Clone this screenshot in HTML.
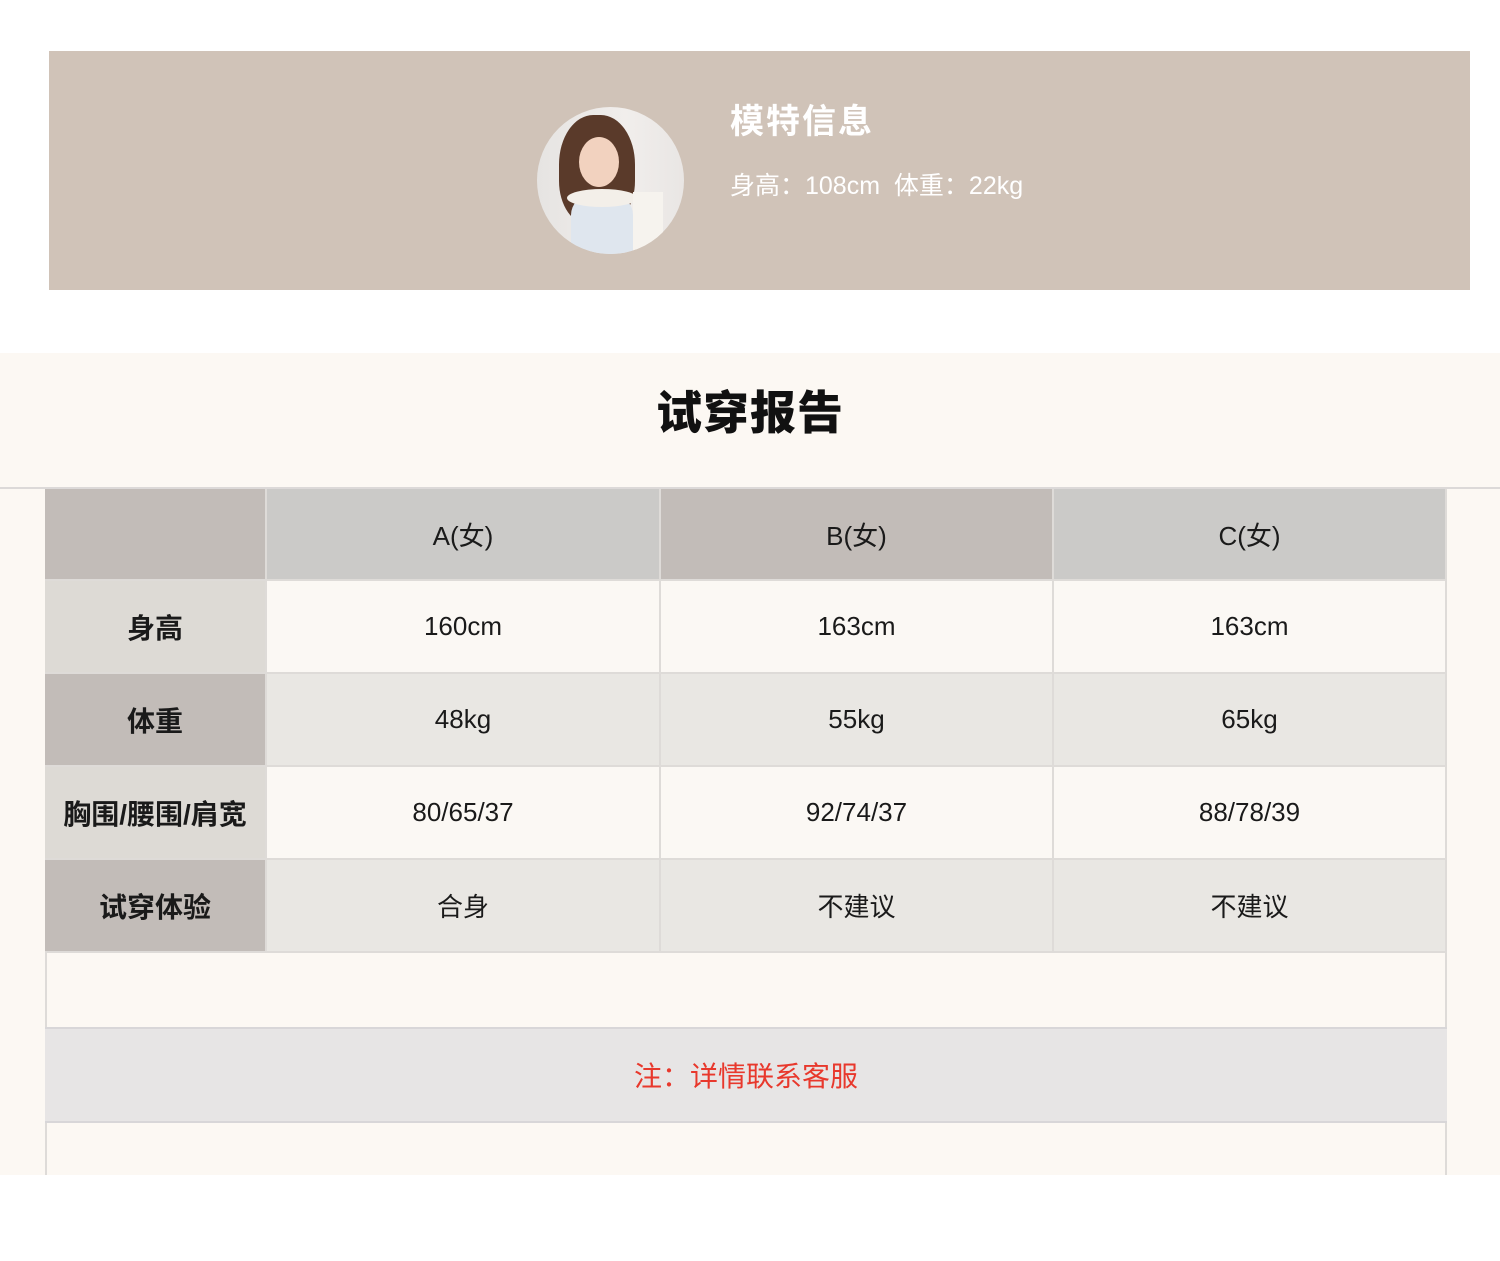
<!DOCTYPE html>
<html><head><meta charset="utf-8"><style>
*{margin:0;padding:0;box-sizing:border-box}
body{width:1500px;height:1261px;background:#fff;position:relative;overflow:hidden;font-family:"Liberation Sans","Noto Sans CJK SC",sans-serif;color:#1a1a1a}
.abs{position:absolute}
.banner{left:49px;top:51px;width:1421px;height:239px;background:#d0c3b8}
.av{left:537px;top:107px;width:147px;height:147px;border-radius:50%;overflow:hidden;background:linear-gradient(90deg,#e6e4e2,#f1eeec 60%,#e9e6e4)}
.t1{left:730px;top:94px;font-size:34px;font-weight:bold;color:#fff;letter-spacing:2px}
.t2{left:730px;top:166px;font-size:25px;color:#fff}
.cream{left:0;top:353px;width:1500px;height:822px;background:#fcf8f3}
.title{left:0;top:377px;width:1500px;text-align:center;font-size:46px;font-weight:900;color:#111;letter-spacing:1px}
.hl{left:0;top:487px;width:1500px;height:2px;background:#dcd9d8}
.c{position:absolute;display:flex;align-items:center;justify-content:center;font-size:26px;border-right:2px solid #dedbd8;border-bottom:2px solid #dedbd8}
.lab{font-weight:bold;font-size:28px}
</style></head><body>
<div class="abs banner"></div>
<div class="abs av">
 <div class="abs" style="left:22px;top:8px;width:76px;height:110px;border-radius:45% 45% 40% 40%;background:#5a3a2a"></div>
 <div class="abs" style="left:42px;top:30px;width:40px;height:50px;border-radius:50%;background:#f2d2bf"></div>
 <div class="abs" style="left:34px;top:88px;width:62px;height:70px;border-radius:20px 20px 0 0;background:#dfe6ee"></div>
 <div class="abs" style="left:30px;top:82px;width:70px;height:18px;border-radius:50%;background:#f3efe9"></div>
 <div class="abs" style="left:96px;top:85px;width:30px;height:70px;background:#f6f3ee"></div>
</div>
<div class="abs t1">模特信息</div>
<div class="abs t2">身高：108cm&nbsp;&nbsp;体重：22kg</div>
<div class="abs cream"></div>
<div class="abs title">试穿报告</div>
<div class="abs hl"></div>
<div class="abs" style="left:45px;top:489px;width:1402px;height:686px;border-left:2px solid #dedbd8;border-right:2px solid #dedbd8"></div>
<div class="c" style="left:45px;top:489px;width:222px;height:92px;background:#c2bcb8"></div>
<div class="c" style="left:267px;top:489px;width:394px;height:92px;background:#cbcac8">A(女)</div>
<div class="c" style="left:661px;top:489px;width:393px;height:92px;background:#c2bcb8">B(女)</div>
<div class="c" style="left:1054px;top:489px;width:393px;height:92px;background:#cbcac8">C(女)</div>

<div class="c lab" style="left:45px;top:581px;width:222px;height:93px;background:#dddad5">身高</div>
<div class="c" style="left:267px;top:581px;width:394px;height:93px;background:#fbf8f4">160cm</div>
<div class="c" style="left:661px;top:581px;width:393px;height:93px;background:#fbf8f4">163cm</div>
<div class="c" style="left:1054px;top:581px;width:393px;height:93px;background:#fbf8f4">163cm</div>

<div class="c lab" style="left:45px;top:674px;width:222px;height:93px;background:#c2bcb8">体重</div>
<div class="c" style="left:267px;top:674px;width:394px;height:93px;background:#e9e7e3">48kg</div>
<div class="c" style="left:661px;top:674px;width:393px;height:93px;background:#e9e7e3">55kg</div>
<div class="c" style="left:1054px;top:674px;width:393px;height:93px;background:#e9e7e3">65kg</div>

<div class="c lab" style="left:45px;top:767px;width:222px;height:93px;background:#dddad5">胸围/腰围/肩宽</div>
<div class="c" style="left:267px;top:767px;width:394px;height:93px;background:#fbf8f4">80/65/37</div>
<div class="c" style="left:661px;top:767px;width:393px;height:93px;background:#fbf8f4">92/74/37</div>
<div class="c" style="left:1054px;top:767px;width:393px;height:93px;background:#fbf8f4">88/78/39</div>

<div class="c lab" style="left:45px;top:860px;width:222px;height:93px;background:#c2bcb8">试穿体验</div>
<div class="c" style="left:267px;top:860px;width:394px;height:93px;background:#e9e7e3">合身</div>
<div class="c" style="left:661px;top:860px;width:393px;height:93px;background:#e9e7e3">不建议</div>
<div class="c" style="left:1054px;top:860px;width:393px;height:93px;background:#e9e7e3">不建议</div>

<div class="c" style="left:45px;top:1027px;width:1402px;height:96px;background:#e7e5e5;border-top:2px solid #d8d6d8;border-right:none;border-bottom:2px solid #d8d6d8;color:#e8382c;font-size:28px">注：详情联系客服</div>
</body></html>
